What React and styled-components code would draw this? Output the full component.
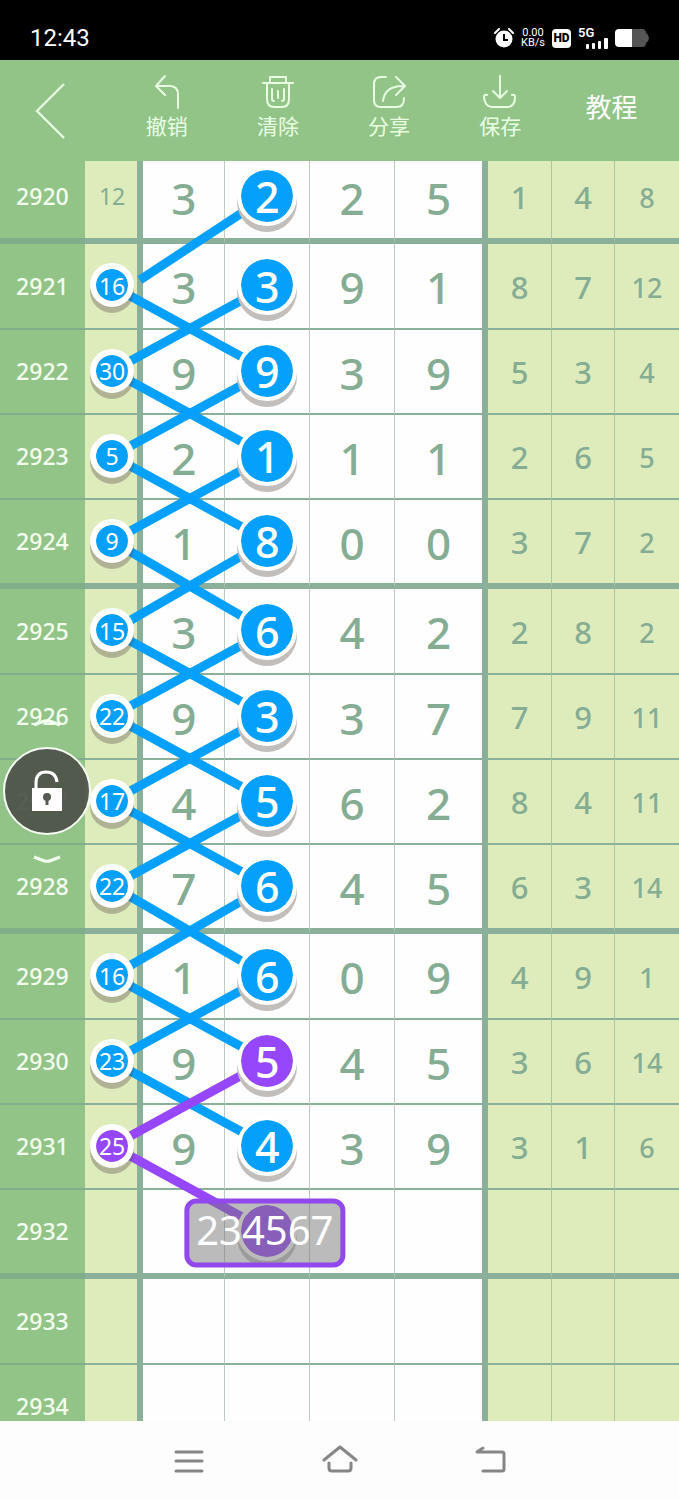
import React, { useState } from 'react';
import styled, { createGlobalStyle } from 'styled-components';

const BLUE = '#04a0fb';
const PURPLE = '#9747fb';
const LINE = '#8ab099';
const INK = '#85ad94';

const GlobalStyle = createGlobalStyle`
  * { box-sizing: border-box; }
  body {
    margin: 0;
    background: #fdfdfd;
    font-family: 'Noto Sans', 'Noto Sans CJK SC', sans-serif;
  }
  button {
    border: 0;
    padding: 0;
    background: none;
    font: inherit;
    color: inherit;
    cursor: pointer;
  }
  svg { display: block; }
`;

const Page = styled.div`
  display: flex;
  flex-direction: column;
  height: 100vh;
  overflow: hidden;
`;

/* ---------- status bar ---------- */

const StatusBar = styled.div`
  flex: none;
  display: flex;
  align-items: flex-end;
  justify-content: space-between;
  height: 60px;
  padding: 0 30px 10px;
  background: #000;
  color: #fff;
  font-family: Roboto, sans-serif;
`;

const Clock = styled.time`
  font-size: 24px;
  line-height: 24px;
`;

const StatusIcons = styled.div`
  display: flex;
  align-items: center;
  gap: 7px;
  height: 24px;
`;

const Speed = styled.span`
  font-size: 11px;
  line-height: 10px;
  text-align: center;
`;

const Hd = styled.span`
  width: 19px;
  border-radius: 4px;
  background: #fff;
  color: #000;
  font-size: 12px;
  line-height: 19px;
  font-weight: 900;
  text-align: center;
`;

const Signal = styled.span`
  display: flex;
  flex-direction: column;
  width: 30px;
  font-size: 13px;
  line-height: 10px;
  font-weight: 600;

  svg { align-self: flex-end; }
`;

/* ---------- toolbar ---------- */

const Toolbar = styled.header`
  flex: none;
  display: grid;
  grid-template-columns: repeat(6, 1fr);
  align-items: center;
  height: 101px;
  padding-right: 12px;
  background: #92c488;
  color: #e8ffe2;
`;

const BackButton = styled.button`
  justify-self: start;
  margin-left: 34px;
`;

const Tool = styled.button`
  display: flex;
  flex-direction: column;
  align-items: center;
  gap: 3px;
  padding-bottom: 9px;
  font-size: 21px;
  line-height: 26px;
`;

const Tutorial = styled.button`
  padding-bottom: 8px;
  font-size: 26px;
  line-height: 36px;
  color: #fff;
`;

/* ---------- board ---------- */

const Board = styled.main`
  position: relative;
  flex: 1;
  min-height: 0;
  overflow: hidden;
`;

/* the chart is scrolled a little past its first row */
const Scrolled = styled.div`
  position: relative;
  margin-top: -6px;
`;

const Chart = styled.table`
  width: 100%;
  table-layout: fixed;
  border-collapse: separate;
  border-spacing: 0;
  font-weight: 500;
`;

const Row = styled.tr`
  height: ${p => p.$height}px;

  > * {
    height: ${p => p.$height}px;
    padding: 0;
    text-align: center;
    line-height: 1;
    color: ${INK};
    border-bottom: ${p => (p.$last ? 6 : 2)}px solid ${LINE};
  }
`;

const Issue = styled.th`
  background: #92c488;
  font-size: 23px;
  font-weight: 500;

  && { color: #f4fff0; border-bottom-color: #80ae8b; }
`;

const Sum = styled.td`
  background: #deecbb;
  font-size: 23px;
  font-weight: 400;
  border-right: 6px solid ${LINE};

  && { padding-left: 2px; }
`;

const Digit = styled.td`
  position: relative;
  background: #fefefe;
  font-size: 44px;
  border-right: ${p => (p.$edge ? `6px solid ${LINE}` : '1px solid #bcc9c1')};

  && { padding-top: 2px; }
`;

const Stat = styled.td`
  background: #deecbb;
  font-size: ${p => (p.$small ? 27 : 31)}px;
  border-right: ${p => (p.$small ? 0 : '1px solid #adc5a0')};

  && { padding-top: 2px; }
`;

const Ball = styled.span`
  position: relative;
  z-index: 2;
  display: flex;
  align-items: center;
  justify-content: center;
  width: ${p => (p.$small ? 44 : 60)}px;
  height: ${p => (p.$small ? 44 : 60)}px;
  margin: 0 auto ${p => (p.$small ? 2 : 4)}px;
  padding-top: 2px;
  border: ${p => (p.$small ? 6 : 4)}px solid #fff;
  border-radius: 50%;
  background: ${p => p.$color};
  background-clip: padding-box;
  box-shadow: 0 6px 0 ${p => (p.$small ? 'rgba(90, 75, 75, 0.35)' : '#c2bebc')};
  color: #fff;
  font-size: ${p => (p.$small ? 23 : 43)}px;
  line-height: 1;
`;

const Links = styled.svg`
  position: absolute;
  inset: 0;
  z-index: 1;
  width: 100%;
  height: 100%;
  pointer-events: none;
`;

const Guess = styled.span`
  position: absolute;
  z-index: 3;
  top: 52%;
  left: 47%;
  transform: translate(-50%, -50%);
  padding: 6px 7px 13px;
  border: 5px solid #9249ec;
  border-radius: 12px;
  background: rgba(120, 120, 120, 0.5);
  color: #fff;
  font-size: 40px;
  line-height: 40px;
  font-weight: 400;
`;

/* ---------- floating lock ---------- */

const Floating = styled.div`
  position: absolute;
  z-index: 4;
  top: 558px;
  left: 3px;
  display: flex;
  flex-direction: column;
  align-items: center;
  gap: 20px;
  color: #f2ffee;
`;

const LockButton = styled.button`
  display: flex;
  align-items: center;
  justify-content: center;
  width: 88px;
  height: 88px;
  border: 2px solid #f6fbf4;
  border-radius: 50%;
  background: rgba(78, 84, 74, 0.95);
  color: #fff;
`;

/* ---------- system navigation ---------- */

const SystemNav = styled.nav`
  flex: none;
  display: flex;
  justify-content: center;
  align-items: center;
  gap: 115px;
  height: 79px;
  background: #fdfdfd;
  color: #868686;
`;

const Icon = ({ size = 36, width = 2, children }) => (
  <svg
    width={size}
    height={size}
    viewBox={`0 0 ${size} ${size}`}
    fill="none"
    stroke="currentColor"
    strokeWidth={width}
    strokeLinecap="round"
    strokeLinejoin="round"
    aria-hidden="true"
  >
    {children}
  </svg>
);

const tools = [
  { label: '撤销', icon: <path d="M16 2 L7 12 L16 21 M7 12 H21 Q29 12 29 21 V34" /> },
  {
    label: '清除',
    icon: <path d="M3 9 H33 M10 9 V3 H26 V9 M7 9 V25 Q7 33 14 33 H22 Q29 33 29 25 V9 M12 15 V25 Q12 27 14 27 M18 17 V24 M24 15 V25 Q24 27 22 27" />,
  },
  {
    label: '分享',
    icon: <path d="M15 3 H10 Q3 3 3 10 V26 Q3 33 10 33 H26 Q33 33 33 24 M25 3 L34 12 L25 21 M34 12 Q14 11 12 27" />,
  },
  {
    label: '保存',
    icon: <path d="M18 2 V24 M11 17 L18 24 L25 17 M5 21 Q2 20 2 23 Q3 33 10 33 H25 Q33 33 33 23 Q33 20 30 21" />,
  },
];

// issue, sum, four digits, three statistics
const rows = [
  [2920, 12, [3, 2, 2, 5], [1, 4, 8]],
  [2921, 16, [3, 3, 9, 1], [8, 7, 12]],
  [2922, 30, [9, 9, 3, 9], [5, 3, 4]],
  [2923, 5, [2, 1, 1, 1], [2, 6, 5]],
  [2924, 9, [1, 8, 0, 0], [3, 7, 2]],
  [2925, 15, [3, 6, 4, 2], [2, 8, 2]],
  [2926, 22, [9, 3, 3, 7], [7, 9, 11]],
  [2927, 17, [4, 5, 6, 2], [8, 4, 11]],
  [2928, 22, [7, 6, 4, 5], [6, 3, 14]],
  [2929, 16, [1, 6, 0, 9], [4, 9, 1]],
  [2930, 23, [9, 5, 4, 5], [3, 6, 14]],
  [2931, 25, [9, 4, 3, 9], [3, 1, 6]],
  [2932, '', ['', '', '', ''], ['', '', '']],
  [2933, '', ['', '', '', ''], ['', '', '']],
  [2934, '', ['', '', '', ''], ['', '', '']],
];

const columns = ['12.5%', '8.6%', '12.1%', '12.5%', '12.5%', '13.7%', '9.4%', '9.3%', '9.4%'];

// rows come in groups of four, the last one of each closed by a thick rule
const HEIGHTS = [86, 85, 85, 89];
const CENTERS = [42, 127, 212, 297];
const rowHeight = i => HEIGHTS[(i + 3) % 4];
const rowCenter = i => (i === 0 ? 41 : 89 + 345 * Math.floor((i - 1) / 4) + CENTERS[(i - 1) % 4]);

const SUM_X = '16.5%';
const DIGIT_X = '39.4%';

// each link goes digit -> sum one row below -> digit two rows below
const starts = [0, 1, 2, 3, 4, 5, 6, 7, 8, 9, 10];

const Link = ({ start }) => {
  const color = start === 10 ? PURPLE : BLUE;
  const first = start === 0;
  return (
    <g stroke={color} strokeWidth="9">
      <line
        x1={DIGIT_X}
        y1={rowCenter(start)}
        x2={first ? '20.6%' : SUM_X}
        y2={first ? rowCenter(1) - 6 : rowCenter(start + 1)}
      />
      <line x1={SUM_X} y1={rowCenter(start + 1)} x2={DIGIT_X} y2={rowCenter(start + 2)} />
    </g>
  );
};

const ChartRow = ({ row, index }) => {
  const [issue, sum, digits, stats] = row;
  const marked = index > 0 && index < 12;

  return (
    <Row $height={rowHeight(index)} $last={index % 4 === 0}>
      <Issue scope="row">{issue}</Issue>
      <Sum>{marked ? <Ball $small $color={index === 11 ? PURPLE : BLUE}>{sum}</Ball> : sum}</Sum>
      {digits.map((d, i) => (
        <Digit key={i} $edge={i === 3}>
          {i === 1 && index < 13 ? (
            <Ball $color={index === 10 || index === 12 ? PURPLE : BLUE}>{d}</Ball>
          ) : (
            d
          )}
          {i === 1 && index === 12 && <Guess>234567</Guess>}
        </Digit>
      ))}
      {stats.map((s, i) => (
        <Stat key={i} $small={i === 2}>{s}</Stat>
      ))}
    </Row>
  );
};

const App = () => {
  const [locked, setLocked] = useState(false);

  return (
    <Page>
      <GlobalStyle />

      <StatusBar>
        <Clock>12:43</Clock>
        <StatusIcons>
          <svg width="20" height="20" viewBox="0 0 20 20" aria-hidden="true">
            <circle cx="10" cy="11" r="8.5" fill="#fff" />
            <path d="M1 5 L5 1 M19 5 L15 1" stroke="#fff" strokeWidth="2" strokeLinecap="round" />
            <path d="M10 6 V12 H14" stroke="#000" strokeWidth="2" fill="none" />
          </svg>
          <Speed>0.00<br />KB/s</Speed>
          <Hd>HD</Hd>
          <Signal>
            5G
            <svg width="23" height="11" viewBox="0 0 23 11" fill="#fff" aria-hidden="true">
              <rect x="1" y="6" width="3" height="5" rx="1" />
              <rect x="7" y="5" width="3" height="6" rx="1" />
              <rect x="13" y="3" width="3" height="8" rx="1" />
              <rect x="19" y="0" width="4" height="11" rx="1" />
            </svg>
          </Signal>
          <svg width="34" height="18" viewBox="0 0 34 18" aria-hidden="true">
            <path d="M17 0 H27 Q31 0 31 4 Q34 6 34 9 Q34 12 31 14 Q31 18 27 18 H17 Z" fill="#555" />
            <path d="M17 0 H4 Q0 0 0 4 V14 Q0 18 4 18 H17 Z" fill="#fff" />
          </svg>
        </StatusIcons>
      </StatusBar>

      <Toolbar>
        <BackButton aria-label="返回">
          <svg width="32" height="56" viewBox="0 0 32 56" fill="none" stroke="currentColor" strokeWidth="2.4" aria-hidden="true">
            <path d="M30 1 L3 28 L30 55" />
          </svg>
        </BackButton>
        {tools.map(tool => (
          <Tool key={tool.label}>
            <Icon>{tool.icon}</Icon>
            {tool.label}
          </Tool>
        ))}
        <Tutorial>教程</Tutorial>
      </Toolbar>

      <Board>
        <Scrolled>
          <Chart>
            <colgroup>
              {columns.map((w, i) => <col key={i} width={w} />)}
            </colgroup>
            <tbody>
              {rows.map((row, i) => <ChartRow key={row[0]} row={row} index={i} />)}
            </tbody>
          </Chart>
          <Links aria-hidden="true">
            {starts.map(s => <Link key={s} start={s} />)}
          </Links>
        </Scrolled>

        <Floating>
          <svg width="28" height="8" viewBox="0 0 28 8" fill="none" stroke="currentColor" strokeWidth="3" aria-hidden="true">
            <path d="M1 6 L10 2.5 Q14 1 18 2.5 L27 6" />
          </svg>
          <LockButton aria-label="锁定" aria-pressed={locked} onClick={() => setLocked(!locked)}>
            <svg width="32" height="42" viewBox="0 0 32 42" aria-hidden="true">
              <path d="M5 18 V13 Q5 2 15 2 Q25 2 26 12" fill="none" stroke="#fff" strokeWidth="3" />
              <path d="M1 18 H31 V41 H1 Z" fill="#fff" />
              <circle cx="16" cy="27" r="4" fill="#555a52" />
              <path d="M16 27 V35" stroke="#555a52" strokeWidth="3" />
            </svg>
          </LockButton>
          <svg width="28" height="8" viewBox="0 0 28 8" fill="none" stroke="currentColor" strokeWidth="3" aria-hidden="true">
            <path d="M1 2 L10 5.5 Q14 7 18 5.5 L27 2" />
          </svg>
        </Floating>
      </Board>

      <SystemNav>
        <button aria-label="菜单">
          <Icon width={3}><path d="M5 9 H31 M5 18 H31 M5 28 H31" /></Icon>
        </button>
        <button aria-label="主页">
          <Icon width={3}><path d="M2 17 L18 4 L34 17 M7 20 V25 Q7 28 10 28 H26 Q29 28 29 25 V20" /></Icon>
        </button>
        <button aria-label="后退">
          <Icon width={3}><path d="M10 5 L4 9 H29 Q31 9 31 11 V26 Q31 28 29 28 H10" /></Icon>
        </button>
      </SystemNav>
    </Page>
  );
};

export default App;
